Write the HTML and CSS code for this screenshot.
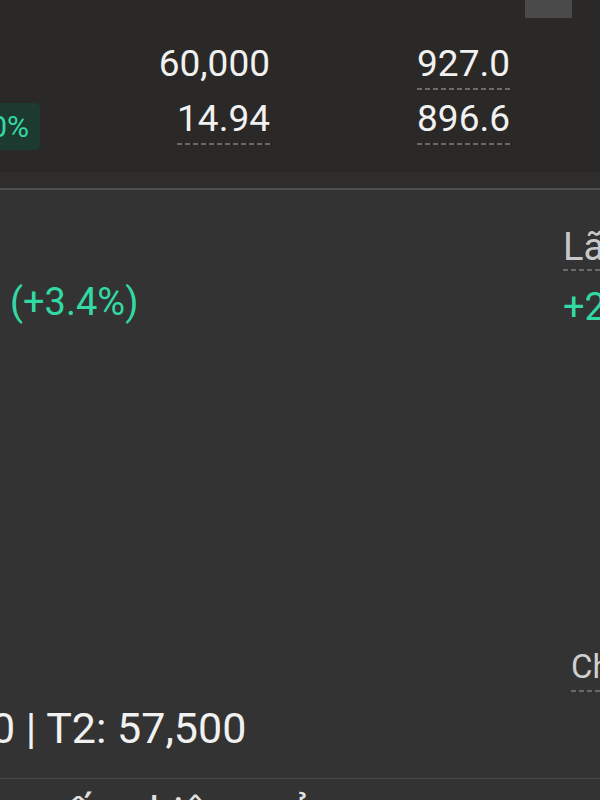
FILE: index.html
```html
<!DOCTYPE html>
<html lang="vi">
<head>
    <meta charset="UTF-8">
    <meta name="viewport" content="width=device-width, initial-scale=1.0">
    <title>Chi tiết mã</title>
    <link rel="stylesheet" href="styles.css">
</head>
<body>
    <div class="screen">
        <!-- Bảng giá tóm tắt -->
        <section class="quote">
            <div class="quote-tabs"><span class="tab-handle"></span></div>
            <div class="quote-row">
                <div class="chg-cell"></div>
                <div class="num">60,000</div>
                <div class="num"><span class="dotted">927.0</span></div>
            </div>
            <div class="quote-row">
                <div class="chg-cell"><span class="chg-badge">+1.90%</span></div>
                <div class="num"><span class="dotted">14.94</span></div>
                <div class="num"><span class="dotted">896.6</span></div>
            </div>
        </section>
        <div class="quote-sep"></div>

        <!-- Vị thế -->
        <section class="position">
            <div class="pos-main">
                <div class="pos-change up">(+3.4%)</div>
                <div class="pos-settle">0 | T2: 57,500</div>
            </div>
            <div class="pos-side">
                <div class="side-label"><span class="dotted">Lãi/lỗ</span></div>
                <div class="side-value up">+2,150,000</div>
                <div class="side-link"><span class="dotted">Chi tiết</span></div>
            </div>
        </section>

        <div class="next-row">sống hiệu quả</div>
    </div>
</body>
</html>
```

FILE: styles.css
```css
/* Màn hình chi tiết mã - giao diện tối */

body {
    margin: 0;
    background-color: #333333;
    font-family: Roboto, "Noto Sans", sans-serif;
    color: #f1f1f1;
}
.screen {
    width: 600px;
    height: 800px;
    overflow: hidden;
}
.up {
    color: #32d9a2;
}
.dotted {
    display: inline-block;
    line-height: 44px;
    padding-bottom: 4px;
    background: linear-gradient(to right, #6a6a6a 5px, transparent 5px) repeat-x left bottom / 8px 2px;
}

/* phần bảng giá */
.quote {
    height: 172px;
    background-color: #2a2927;
}
.quote-tabs {
    display: flex;
    justify-content: flex-end;
    height: 18px;
    margin-bottom: 18px;
    padding-right: 28px;
}
.tab-handle {
    width: 47px;
    background-color: #4a4a4a;
}
.quote-row {
    display: grid;
    grid-template-columns: 40px 230px 240px;
    height: 55px;
    font-size: 37px;
    line-height: 55px;
}
.num {
    text-align: right;
    white-space: nowrap;
}
.chg-cell {
    display: flex;
    justify-content: flex-end;
    align-items: flex-start;
}
.chg-badge {
    flex-shrink: 0;
    margin-top: 12px;
    height: 47px;
    padding: 0 11px 0 12px;
    font-size: 30px;
    line-height: 48px;
    white-space: nowrap;
    color: #32d9a2;
    background-color: #1c3a2f;
    border-radius: 5px;
}
.quote-sep {
    height: 16px;
    background-color: #2e2d2c;
    border-bottom: 2px solid #4e4e4e;
}

/* phần vị thế */
.position {
    display: flex;
    height: 588px;
    border-bottom: 1px solid #464646;
}
.pos-main {
    flex: 1;
    display: flex;
    flex-direction: column;
    justify-content: space-between;
    padding: 90px 0 25px;
}
.pos-change {
    padding-left: 10px;
    font-size: 38px;
    line-height: 44px;
}
.pos-settle {
    margin-left: -9px;
    font-size: 43px;
    line-height: 50px;
    white-space: nowrap;
}
.pos-side {
    width: 37px;
    flex-shrink: 0;
    padding-top: 35px;
    white-space: nowrap;
}
.side-label {
    font-size: 38px;
    line-height: 44px;
    color: #c8c8c8;
}
.side-label .dotted {
    padding-bottom: 2px;
}
.side-value {
    margin-top: 14px;
    font-size: 38px;
    line-height: 44px;
}
.side-link {
    margin-top: 319px;
    padding-left: 8px;
    font-size: 33px;
    line-height: 38px;
    color: #cfcfcf;
}
.side-link .dotted {
    line-height: 38px;
    padding-bottom: 6px;
}

.next-row {
    padding: 8px 0 0 44px;
    font-size: 43px;
    line-height: 50px;
    color: #e0e0e0;
    white-space: nowrap;
}
```
